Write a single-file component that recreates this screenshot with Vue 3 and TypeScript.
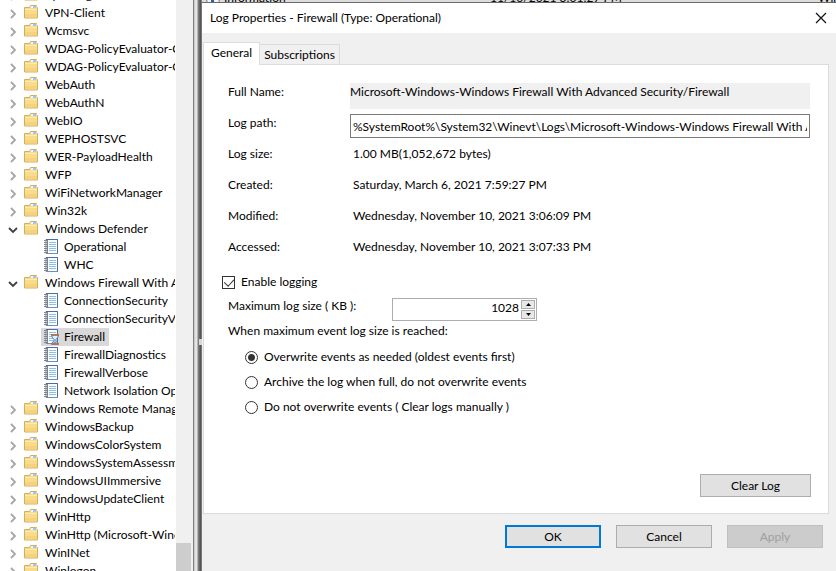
<script setup lang="ts">
import { ref } from 'vue'

interface TreeNode {
  label: string
  kind: 'folder' | 'log'
  open?: boolean
  selected?: boolean
}

const folder = (label: string, open = false): TreeNode => ({ label, kind: 'folder', open })
const log = (label: string, selected = false): TreeNode => ({ label, kind: 'log', selected })

const nodes: TreeNode[] = [
  folder('Vpn Plugin Platform'),
  folder('VPN-Client'),
  folder('Wcmsvc'),
  folder('WDAG-PolicyEvaluator-CSP'),
  folder('WDAG-PolicyEvaluator-GP'),
  folder('WebAuth'),
  folder('WebAuthN'),
  folder('WebIO'),
  folder('WEPHOSTSVC'),
  folder('WER-PayloadHealth'),
  folder('WFP'),
  folder('WiFiNetworkManager'),
  folder('Win32k'),
  folder('Windows Defender', true),
  log('Operational'),
  log('WHC'),
  folder('Windows Firewall With Advanced Security', true),
  log('ConnectionSecurity'),
  log('ConnectionSecurityVerbose'),
  log('Firewall', true),
  log('FirewallDiagnostics'),
  log('FirewallVerbose'),
  log('Network Isolation Operational'),
  folder('Windows Remote Management'),
  folder('WindowsBackup'),
  folder('WindowsColorSystem'),
  folder('WindowsSystemAssessmentTool'),
  folder('WindowsUIImmersive'),
  folder('WindowsUpdateClient'),
  folder('WinHttp'),
  folder('WinHttp (Microsoft-Windows-WinHttp)'),
  folder('WinINet'),
  folder('Winlogon'),
]

const details = [
  { label: 'Log size:', value: '1.00 MB(1,052,672 bytes)' },
  { label: 'Created:', value: 'Saturday, March 6, 2021 7:59:27 PM' },
  { label: 'Modified:', value: 'Wednesday, November 10, 2021 3:06:09 PM' },
  { label: 'Accessed:', value: 'Wednesday, November 10, 2021 3:07:33 PM' },
]

const policies = [
  { id: 'overwrite', label: 'Overwrite events as needed (oldest events first)' },
  { id: 'archive', label: 'Archive the log when full, do not overwrite events' },
  { id: 'manual', label: 'Do not overwrite events ( Clear logs manually )' },
]

const logPath = ref(
  '%SystemRoot%\\System32\\Winevt\\Logs\\Microsoft-Windows-Windows Firewall With Advanced Security%4Firewall.evtx',
)
const enabled = ref(true)
const maxSize = ref('1028')
const policy = ref('overwrite')

function step(delta: number) {
  maxSize.value = String(Math.max(0, Number(maxSize.value) + delta))
}
</script>

<template>
  <div class="screen">
    <nav class="tree" aria-label="Event logs">
      <ul>
        <li v-for="node in nodes" :key="node.label" class="node" :class="node.kind">
          <template v-if="node.kind === 'folder'">
            <button class="twisty" type="button" :aria-label="node.label" :aria-expanded="node.open">
              <svg v-if="node.open" width="10" height="10" viewBox="0 0 10 10">
                <path d="M1 3l4 4 4-4" fill="none" stroke="#404040" stroke-width="1.8" />
              </svg>
              <svg v-else width="10" height="10" viewBox="0 0 10 10">
                <path d="M3 1l4 4-4 4" fill="none" stroke="#a6a6a6" stroke-width="1.8" />
              </svg>
            </button>
            <svg class="icon" width="15" height="14" viewBox="0 0 15 14">
              <path d="M.5 2.5h5l1-2h6v2h1v10.500H.5z" fill="#f9db8c" stroke="#d0ae62" />
              <path d="M7 1h5.500v2H7z" fill="#f4f8fb" />
              <path d="M9 1.500h3v1H9z" fill="#4f94d8" />
              <path d="M1 4h12v1H1z" fill="#fdebb4" />
              <path d="M1 9h12v3.500H1z" fill="#f5d27c" />
            </svg>
            <span class="label">{{ node.label }}</span>
          </template>
          <span v-else class="entry" :class="{ selected: node.selected }">
            <svg class="icon" width="15" height="16" viewBox="0 0 15 16">
              <path d="M2 .5h11.500v14H2z" fill="#fafdff" stroke="#7d8cab" />
              <path d="M2 .5h11.500M13.500 .5v14" stroke="#4f69ad" />
              <path d="M5 3.500h7M5 5.500h7M5 7.500h7M5 9.500h7M5 11.500h7" stroke="#8fc0de" />
              <path d="M1.500 1v14" stroke="#858585" stroke-width="3" stroke-dasharray="1 1" />
              <path d="M3.500 1v14" stroke="#7c828e" />
              <template v-if="node.selected">
                <path d="M8 6h6v2l-2.500 3 2.500 3v1H8v-1l2.500-3L8 8z" fill="#e5f2fb" stroke="#4e86bd" />
                <path d="M7 6h8M7 15h8" stroke="#b86536" stroke-width="1.500" />
                <path d="M9 14l2-2 2 2z" fill="#5c9fd8" />
              </template>
            </svg>
            <span class="label">{{ node.label }}</span>
          </span>
        </li>
      </ul>
    </nav>
    <div class="scrollbar"><div class="thumb"></div></div>
    <div class="splitter"><i class="notch"></i></div>

    <main class="workspace">
      <div class="events" aria-hidden="true">
        <i class="info"></i>
        <span>Information</span>
        <span>11/10/2021 3:01:27 PM</span>
        <span>Windows</span>
      </div>
      <section class="dialog" role="dialog" aria-labelledby="dialog-title">
        <header class="titlebar">
          <h1 id="dialog-title">Log Properties - Firewall (Type: Operational)</h1>
          <button class="close" type="button" aria-label="Close">
            <svg width="12" height="12" viewBox="0 0 12 12">
              <path d="M1 1l10 10M11 1L1 11" stroke="#111" stroke-width="1.200" />
            </svg>
          </button>
        </header>

        <div class="tabs" role="tablist">
          <button class="tab active" type="button" role="tab" aria-selected="true">General</button>
          <button class="tab" type="button" role="tab" aria-selected="false">Subscriptions</button>
        </div>

        <form class="page" @submit.prevent>
          <div class="row">
            <span class="name">Full Name:</span>
            <span class="fullname">Microsoft-Windows-Windows Firewall With Advanced Security/Firewall</span>
          </div>
          <div class="row">
            <label class="name" for="path">Log path:</label>
            <input id="path" v-model="logPath" class="path" type="text" />
          </div>
          <div v-for="item in details" :key="item.label" class="row">
            <span class="name">{{ item.label }}</span>
            <span class="value">{{ item.value }}</span>
          </div>

          <div class="enable">
            <input id="enable" v-model="enabled" class="check" type="checkbox" />
            <label for="enable">Enable logging</label>
          </div>

          <div class="size">
            <label class="sizename" for="size">Maximum log size ( KB ):</label>
            <div class="spinner">
              <input id="size" v-model="maxSize" type="text" inputmode="numeric" />
              <div class="steps">
                <button type="button" aria-label="Increase" @click="step(64)">
                  <svg width="5" height="3" viewBox="0 0 5 3"><path d="M0 3L2.500 0 5 3z" /></svg>
                </button>
                <button type="button" aria-label="Decrease" @click="step(-64)">
                  <svg width="5" height="3" viewBox="0 0 5 3"><path d="M0 0L2.500 3 5 0z" /></svg>
                </button>
              </div>
            </div>
          </div>

          <fieldset>
            <legend>When maximum event log size is reached:</legend>
            <div v-for="item in policies" :key="item.id" class="option">
              <input :id="item.id" v-model="policy" type="radio" name="policy" :value="item.id" />
              <label :for="item.id">{{ item.label }}</label>
            </div>
          </fieldset>

          <button class="button clear" type="button">Clear Log</button>
        </form>

        <footer class="actions">
          <button class="button primary" type="button">OK</button>
          <button class="button" type="button">Cancel</button>
          <button class="button" type="button" disabled>Apply</button>
        </footer>
      </section>
    </main>
  </div>
</template>

<style>
body {
  margin: 0;
  overflow: hidden;
}
</style>

<style scoped>
.screen {
  display: flex;
  height: 100vh;
  overflow: hidden;
  background: #f0f0f0;
  color: #000;
  font: 12px/18px Lato, 'Open Sans', sans-serif;
}

.screen * {
  box-sizing: border-box;
}

button,
input {
  font: inherit;
  color: inherit;
  margin: 0;
  padding: 0;
}

.tree {
  flex: 0 0 176px;
  overflow: hidden;
  background: #fff;
}

ul {
  list-style: none;
  margin: -14px 0 0;
  padding: 0 1px 0 8px;
}

.node {
  display: flex;
  align-items: center;
  height: 18px;
  white-space: nowrap;
  overflow: hidden;
}

.node.log {
  padding-left: 33px;
}

.twisty {
  display: flex;
  flex: none;
  width: 16px;
  height: 18px;
  padding-top: 5px;
  border: 0;
  background: none;
}

.icon {
  flex: none;
}

.folder .icon {
  margin-right: 6px;
  margin-bottom: 2px;
}

.entry {
  display: flex;
  align-items: center;
  height: 18px;
  padding: 0 4px 0 3px;
}

.entry .icon {
  margin-right: 5px;
}

.entry.selected {
  background: #d9d9d9;
}

.scrollbar {
  display: flex;
  flex: 0 0 17px;
  flex-direction: column;
  justify-content: flex-end;
  padding-right: 2px;
}

.thumb {
  height: 28px;
  background: #cdcdcd;
}

.splitter {
  display: flex;
  flex: 0 0 9px;
  align-items: center;
  justify-content: flex-end;
  padding-top: 112px;
  background: linear-gradient(
    to right,
    #808080 0 1px,
    #c8c8c8 1px 2px,
    #e4e4e4 2px 4px,
    #b4b4b4 4px 5px,
    #7c7c7c 5px 6px,
    #666 6px 7px,
    #555 7px 8px,
    #777 8px 9px
  );
}

.notch {
  width: 3px;
  height: 6px;
  background: #d8d8d8;
}

.workspace {
  display: flex;
  flex: 1;
  flex-direction: column;
  min-width: 0;
}

.events {
  display: grid;
  grid-template-columns: 22px 266px 1fr 18px;
  align-items: start;
  height: 2px;
  overflow: hidden;
  background: #dcdcdc;
  line-height: 12px;
  white-space: nowrap;
}

.events > * {
  margin-top: -8px;
}

.info {
  width: 14px;
  height: 14px;
  margin-left: 4px;
  border: 1px solid #777;
  border-radius: 7px;
  background: linear-gradient(to right, #f4f4f4 0 4px, #2f5db4 4px 7px, #f4f4f4 7px);
}

.dialog {
  display: flex;
  flex: 1;
  flex-direction: column;
  border-top: 1px solid #6b6b6b;
}

.titlebar {
  display: flex;
  align-items: center;
  justify-content: space-between;
  height: 30px;
  padding: 0 9px 0 8px;
  background: #fff;
}

h1 {
  margin: 0;
  font-size: 12px;
  font-weight: 400;
}

.close {
  display: flex;
  border: 0;
  background: none;
}

.tabs {
  display: flex;
  align-items: flex-end;
  height: 31px;
  padding-left: 1px;
}

.tab {
  height: 20px;
  padding: 0 4px;
  border: 1px solid #dcdcdc;
  border-width: 1px 1px 0 0;
  background: #f0f0f0;
}

.tab.active {
  z-index: 1;
  height: 23px;
  margin-bottom: -1px;
  padding: 0 7px 3px;
  border-left-width: 1px;
  background: #fff;
}

.page {
  display: flex;
  flex: 1;
  flex-direction: column;
  align-items: stretch;
  margin: 0 7px 0 1px;
  padding: 18px 17px 16px 18px;
  border: 1px solid #dcdcdc;
  background: #fff;
}

.row {
  display: grid;
  grid-template-columns: 122px 1fr;
  align-items: start;
  height: 31px;
  padding: 0 1px 0 6px;
  white-space: nowrap;
}

.fullname {
  height: 26px;
  background: #f0f0f0;
  overflow: hidden;
}

.path {
  width: 100%;
  height: 24px;
  padding: 0 2px;
  border: 1px solid #7a7a7a;
  background: #fff;
}

.value {
  padding-left: 3px;
}

.enable {
  display: flex;
  align-items: center;
  gap: 6px;
  height: 18px;
  margin-top: 4px;
}

.check {
  display: grid;
  justify-content: center;
  appearance: none;
  width: 13px;
  height: 13px;
  border: 1px solid #333;
  background: #fff;
}

.check:checked::after {
  content: '';
  width: 5px;
  height: 8px;
  border: solid #333;
  border-width: 0 1px 1px 0;
  transform: rotate(42deg);
}

.size {
  display: flex;
  align-items: flex-start;
  height: 25px;
  margin-top: 6px;
  padding-left: 6px;
}

.sizename {
  width: 164px;
}

.spinner {
  display: flex;
  width: 145px;
  height: 23px;
  margin-top: 1px;
  border: 1px solid #abadb3;
}

.spinner input {
  flex: 1;
  min-width: 0;
  height: 18px;
  padding-right: 1px;
  border: 0;
  text-align: right;
}

.steps {
  display: grid;
  gap: 1px;
  width: 14px;
  height: 19px;
  margin: 1px 1px 0;
}

.steps button {
  display: flex;
  align-items: center;
  justify-content: center;
  border: 1px solid #adadad;
  background: #e8e8e8;
}

fieldset {
  margin: 0;
  padding: 0 0 0 6px;
  border: 0;
}

legend {
  padding: 0;
  margin-bottom: 8px;
}

.option {
  display: flex;
  align-items: center;
  gap: 6px;
  height: 18px;
  margin: 0 0 7px 17px;
}

.option input {
  appearance: none;
  width: 13px;
  height: 13px;
  border: 1px solid #333;
  border-radius: 50%;
  background: #fff;
}

.option input:checked {
  background: radial-gradient(circle, #333 0 3px, #fff 4px);
}

.button {
  width: 96px;
  height: 23px;
  border: 1px solid #adadad;
  background: #e1e1e1;
}

.clear {
  align-self: flex-end;
  width: 111px;
  margin-top: auto;
}

.actions {
  display: flex;
  justify-content: flex-end;
  gap: 15px;
  padding: 11px 13px 23px;
}

.primary {
  border: 2px solid #0078d7;
}

.button:disabled {
  border-color: #bfbfbf;
  background: #ccc;
  color: #a0a0a0;
}
</style>
